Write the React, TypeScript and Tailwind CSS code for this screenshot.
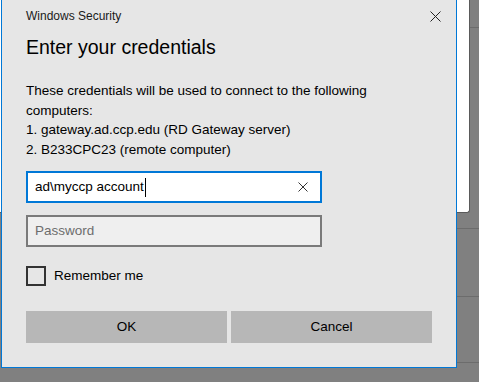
import React from 'react';

const App: React.FC = () => {
    return (
        <div className="relative w-[479px] h-[382px] overflow-hidden bg-[#808080] font-['Segoe_UI','Liberation_Sans',Arial,sans-serif] text-[#000]">
            {/* Desktop behind the dialog */}
            <div className="absolute left-0 top-0 w-[470px] h-[213px] bg-white border-r border-b border-[#5a5a5a] rounded-br-[3px]" />
            <div className="absolute left-[470px] top-[27px] w-[9px] h-px bg-[#6c6c6c]" />
            <div className="absolute left-[457px] top-[228px] w-[22px] h-px bg-[#6c6c6c]" />
            <div className="absolute left-[457px] top-[296px] w-[22px] h-px bg-[#6c6c6c]" />
            <div className="absolute left-[457px] top-[362px] w-[22px] h-px bg-[#6c6c6c]" />

            {/* Dialog */}
            <div className="absolute left-[1px] top-0 w-[456px] h-[368px] bg-[#e6e6e6] border-x border-b border-[#0078d7] flex flex-col pl-6">
                <div className="flex items-center justify-between pt-2 h-6">
                    <span className="text-[12px] leading-4 text-[#1a1a1a]">Windows Security</span>
                    <svg width="11" height="11" viewBox="0 0 11 11" className="mr-[15px]">
                        <path d="M0.5 0.5 L10.5 10.5 M10.5 0.5 L0.5 10.5" stroke="#222" strokeWidth="1" />
                    </svg>
                </div>

                <h1 className="mt-[9px] text-[19.5px] leading-7 text-[#000]">Enter your credentials</h1>

                <div className="mt-5 text-[13.5px] leading-[19.5px] text-[#000] whitespace-nowrap">
                    <div>These credentials will be used to connect to the following</div>
                    <div>computers:</div>
                    <div>1. gateway.ad.ccp.edu (RD Gateway server)</div>
                    <div>2. B233CPC23 (remote computer)</div>
                </div>

                {/* Username */}
                <div className="mt-3 w-[296px] h-8 border-2 border-[#0078d7] bg-white flex items-center pl-[7px] pr-[8px]">
                    <span className="text-[13.5px] leading-5">ad\myccp account</span>
                    <span className="ml-px w-px h-[19px] bg-black" />
                    <span className="flex-1" />
                    <svg width="10" height="10" viewBox="0 0 10 10" className="mr-[4px]">
                        <path d="M0.5 0.5 L9.5 9.5 M9.5 0.5 L0.5 9.5" stroke="#333" strokeWidth="1" />
                    </svg>
                </div>

                {/* Password */}
                <div className="mt-3 w-[296px] h-8 border-2 border-[#7a7a7a] bg-[#efefef] flex items-center pl-[7px]">
                    <span className="text-[13.5px] leading-5 text-[#6d6d6d]">Password</span>
                </div>

                {/* Remember me */}
                <div className="mt-[19px] flex items-center h-5">
                    <div className="w-5 h-5 border-2 border-[#333]" />
                    <span className="ml-2 text-[13.5px] leading-5">Remember me</span>
                </div>

                {/* Buttons */}
                <div className="mt-[25px] flex gap-1">
                    <button className="w-[201px] h-8 bg-[#b7b7b7] text-[13.5px] text-black">OK</button>
                    <button className="w-[201px] h-8 bg-[#b7b7b7] text-[13.5px] text-black">Cancel</button>
                </div>
            </div>
        </div>
    );
};

export default App;
